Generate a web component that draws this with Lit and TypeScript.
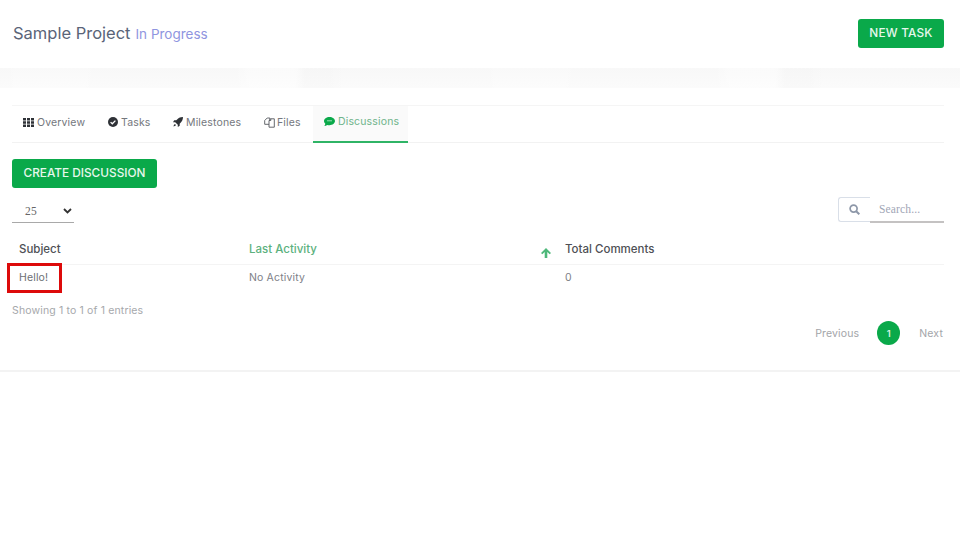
import { LitElement, html, css } from "lit";
import { customElement } from "lit/decorators.js";

@customElement("app-root")
export class AppRoot extends LitElement {
  static styles = css`
    :host { display: block; width: 960px; height: 540px; background: #fff; overflow: hidden;
      font-family: Inter, "Open Sans", sans-serif; color: #6b6f76; letter-spacing: .15px; }
    * { box-sizing: border-box; }
    svg { display: block; flex: none; }
    .head { height: 68px; display: flex; align-items: center; justify-content: space-between; padding: 0 16px 2px 13px; }
    .title { font-size: 16.5px; color: #5a6478; display: flex; align-items: baseline; gap: 5px; margin-top: -1px; letter-spacing: 0; }
    .status { font-size: 13.5px; color: #8f95e0; }
    .btn { background: #0aa94a; color: #e6f7ec; border-radius: 3px; font-size: 11.8px; font-weight: 500; display: flex; align-items: center; justify-content: center; letter-spacing: 0; padding-bottom: 1px; }
    .new { width: 86px; height: 29px; margin-top: 1px; letter-spacing: .2px; }
    .band { height: 20px; background:
      repeating-linear-gradient(90deg, rgba(255,255,255,0) 0 8px, rgba(255,255,255,.2) 15px 85px, rgba(255,255,255,0) 95px 235px, rgba(255,255,255,.4) 250px 295px, rgba(0,0,0,.006) 305px 330px, rgba(255,255,255,0) 345px 480px),
      linear-gradient(#f8f8f8, #fbfbfb); }
    .panel { height: 284px; padding: 17px 16px 0 12px; border-bottom: 2px solid #f3f3f3; }
    .tabs { height: 38px; display: flex; padding-left: 0; border-top: 1px solid #f5f5f5; border-bottom: 1px solid #f2f2f2; }
    .tab { display: flex; align-items: center; gap: 3px; font-size: 10.5px; color: #74777d; height: 37px; padding-bottom: 5px; }
    .tab svg { color: #2f3237; }
    .t1 { margin-left: 11px; width: 85px; }
    .t2 { width: 65px; }
    .t3 { width: 91px; }
    .t4 { width: 49px; gap: 2px; }
    .active { width: 95px; height: 37px; padding-left: 11px; padding-bottom: 4px; background: #fafafa; color: #6fb48b; border-bottom: 2px solid #2fb466; }
    .active svg { color: #0aa94a; }
    .create { width: 145px; height: 29px; margin-top: 16px; }
    .controls { display: flex; justify-content: space-between; align-items: flex-start; height: 35px; margin-top: 9px; }
    .size { width: 62px; height: 26px; border-bottom: 1px solid #a9a9a9; display: flex; align-items: center; justify-content: space-between; padding: 3px 2px 0 13px; font: 11.5px "Liberation Serif", serif; color: #666; }
    .search { display: flex; }
    .icon-box { width: 32px; height: 25px; border: 1px solid #d9dfe8; border-right: 0; border-radius: 3px 0 0 3px; display: flex; align-items: center; justify-content: center; color: #8d97a8; margin-left: 1px; }
    .input { width: 74px; height: 26px; border-bottom: 2px solid #c4c2c2; font: 11.5px "Liberation Serif", serif; color: #9fa6b6; padding: 0 0 1px 9px; display: flex; align-items: center; }
    .row { display: grid; grid-template-columns: 230px 316px 1fr; align-items: center; padding-left: 7px; position: relative; }
    .th { height: 33px; font-size: 11.5px; font-weight: 500; color: #4e5055; border-bottom: 1px solid #f4f4f4; padding-top: 1px; letter-spacing: 0; }
    .th .sorted { color: #5cb17e; }
    .last { display: flex; justify-content: space-between; align-items: center; padding-right: 7px; }
    .arrow { color: #4eb87a; margin: 8px 7px 0 0; }
    .td { height: 28px; font-size: 10.5px; color: #7e8187; padding-bottom: 3px; }
    .hello { color: #6c6e73; position: relative; }
    .mark { position: absolute; left: -12px; top: -8px; width: 55px; height: 30px; border: 3px solid #dd0a0a; }
    .foot { font-size: 10.5px; color: #a6a8ac; margin-top: 11px; }
    .pager { display: flex; justify-content: flex-end; align-items: center; margin-top: 4px; font-size: 10.5px; color: #a3a5a9; }
    .num { width: 23px; height: 24px; border-radius: 50%; background: #0aa94a; color: #d9f3e2; display: flex; align-items: center; justify-content: center; font-size: 9.5px; font-weight: 600; margin: 0 19px 0 18px; }
    .next { margin-right: 1px; }
  `;

  render() {
    return html`
      <div class="head">
        <div class="title">Sample Project <span class="status">In Progress</span></div>
        <div class="btn new">NEW TASK</div>
      </div>
      <div class="band"></div>
      <div class="panel">
        <div class="tabs">
          <div class="tab t1">
            <svg width="11" height="9" viewBox="0 0 11 9" fill="currentColor"><path d="M0 0h3v2.5H0zM4 0h3v2.5H4zM8 0h3v2.5H8zM0 3.3h3v2.4H0zM4 3.3h3v2.4H4zM8 3.3h3v2.4H8zM0 6.5h3V9H0zM4 6.5h3V9H4zM8 6.5h3V9H8z"/></svg>Overview
          </div>
          <div class="tab t2">
            <svg width="10" height="10" viewBox="0 0 10 10"><circle cx="5" cy="5" r="5" fill="currentColor"/><path d="M2.600 5.100l1.700 1.700 3.100-3.200" fill="none" stroke="#fff" stroke-width="1.300"/></svg>Tasks
          </div>
          <div class="tab t3">
            <svg width="10" height="10" viewBox="0 0 10 10" fill="currentColor"><path d="M10 0C7 0 5 1.200 3.300 3.300H1.200L0 5.200h2.200l2.600 2.600V10l1.900-1.200V6.700C8.800 5 10 3 10 0zM2 7.100C1 7.500.7 8.700.5 9.500c.8-.2 2-.5 2.400-1.500z"/></svg>Milestones
          </div>
          <div class="tab t4">
            <svg width="11" height="11" viewBox="0 0 11 11" fill="none" stroke="#55585e" stroke-width=".9"><path d="M.7 3.500 3.200 1h2.600v6.300H.7z"/><path d="M5 3.500 6.800 1.800h3.500v8.400H5z" fill="#fff"/><path d="M5 3.500h1.800V1.800"/></svg>Files
          </div>
          <div class="tab active">
            <svg width="11" height="10" viewBox="0 0 11 10"><path d="M5.500 0C2.500 0 0 1.800 0 4.100c0 1 .5 1.900 1.300 2.600-.1.900-.5 1.700-1 2.300 1.200-.1 2.200-.6 2.900-1.100.7.200 1.500.3 2.300.3 3 0 5.500-1.800 5.500-4.100S8.500 0 5.500 0z" fill="currentColor"/><path d="M3 3.800h5" stroke="#bfe8cf" stroke-width=".8"/></svg>Discussions
          </div>
        </div>
        <div class="btn create">CREATE DISCUSSION</div>
        <div class="controls">
          <div class="size">25
            <svg width="9" height="6" viewBox="0 0 9 6" fill="none" stroke="#333" stroke-width="1.800"><path d="M1 1l3.500 3.500L8 1"/></svg>
          </div>
          <div class="search">
            <div class="icon-box">
              <svg width="11" height="11" viewBox="0 0 11 11" fill="none" stroke="currentColor" stroke-width="1.700"><circle cx="4.600" cy="4.600" r="3.500"/><path d="M7.200 7.200 10.300 10.300" stroke-width="2"/></svg>
            </div>
            <div class="input">Search...</div>
          </div>
        </div>
        <div class="row th">
          <div>Subject</div>
          <div class="last"><span class="sorted">Last Activity</span>
            <svg class="arrow" width="10" height="10" viewBox="0 0 10 10" fill="currentColor"><path d="M5 0 10 5 8.700 6.300 6.300 4V10H3.700V4L1.300 6.300 0 5z"/></svg>
          </div>
          <div>Total Comments</div>
        </div>
        <div class="row td">
          <div><span class="hello">Hello!<span class="mark"></span></span></div>
          <div>No Activity</div>
          <div>0</div>
        </div>
        <div class="foot">Showing 1 to 1 of 1 entries</div>
        <div class="pager">Previous<div class="num">1</div><span class="next">Next</span></div>
      </div>
    `;
  }
}
